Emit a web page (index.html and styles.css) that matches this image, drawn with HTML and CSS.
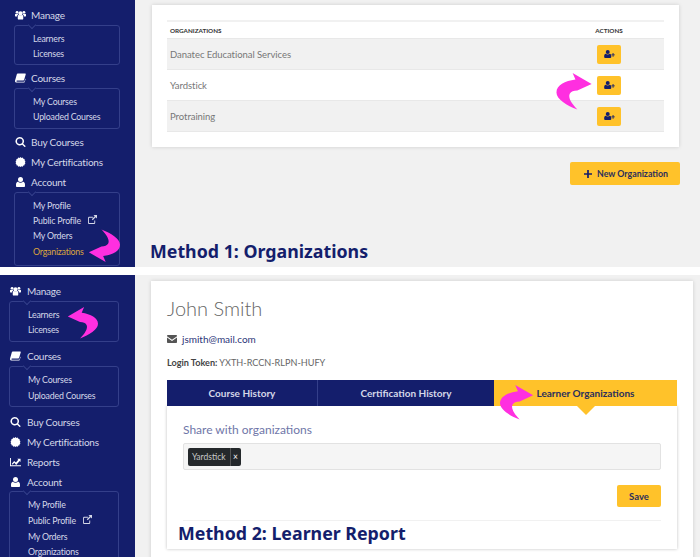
FILE: index.html
```html
<!DOCTYPE html>
<html lang="en">

<head>
    <meta charset="UTF-8">
    <meta name="viewport" content="width=device-width, initial-scale=1.0">
    <title>Sharing learners with organizations</title>
    <link rel="stylesheet" href="styles.css">
</head>

<body>

    <!-- Shared icons -->
    <svg class="icon-defs" aria-hidden="true">
        <symbol id="i-users" viewBox="0 0 24 20">
            <circle cx="12" cy="6.5" r="4.5" />
            <circle cx="4.5" cy="4" r="3" />
            <circle cx="19.5" cy="4" r="3" />
            <path d="M6 12.5c0-1.500 1.500-2.500 3-2.500 1 1 5 1 6 0 1.500 0 3 1 3 2.500V18c0 1-1 2-2 2H8c-1 0-2-1-2-2z" />
            <path d="M0 9c0-1 .8-1.800 1.800-1.800 1 .8 3 1 4.200.6.300 1 .9 1.500 1 1.700-1.500.6-2.500 1.500-2.700 3.500H1c-.6 0-1-.4-1-1zM24 9c0-1-.8-1.800-1.800-1.800-1 .8-3 1-4.200.6-.3 1-.9 1.500-1 1.700 1.500.6 2.500 1.500 2.700 3.500H23c.6 0 1-.4 1-1z" />
        </symbol>
        <symbol id="i-book" viewBox="0 0 24 20">
            <path d="M6 0h16c1 0 1.800.8 1.500 2l-3.500 12c-.3 1-1 1.500-2 1.500H5c-1.500 0-2.200.6-2.200 1.200S3.500 18 5 18h14c.8 0 1.500-.3 1.800-1l1.700-5.500.9.800L20.800 19c-.3.700-1 1-1.800 1H4c-2.500 0-4-1.500-4-3.500 0-.6.100-1.200.3-1.800L4 2C4.300.8 5 0 6 0z" />
        </symbol>
        <symbol id="i-search" viewBox="0 0 20 20">
            <path d="M8.500 0a8.500 8.500 0 0 1 6.900 13.400l4.200 4.200a1.400 1.400 0 0 1-2 2l-4.200-4.200A8.500 8.500 0 1 1 8.500 0zm0 3a5.500 5.500 0 1 0 0 11 5.500 5.500 0 0 0 0-11z" />
        </symbol>
        <symbol id="i-cert" viewBox="0 0 20 20">
            <path d="M10 0l2 1.800L14.600 1l1 2.400 2.600.4-.1 2.700L20 8.400 18.700 10.500 20 12.600l-1.900 1.900.1 2-2.600.6-1 2.400-2.600-.8L10 20l-2-1.300-2.600.8-1-2.400-2.600-.6.100-2L0 12.600l1.300-2.100L0 8.400l1.900-1.900-.1-2.700 2.600-.4 1-2.400L8 1.800z" />
        </symbol>
        <symbol id="i-user" viewBox="0 0 18 20">
            <circle cx="9" cy="5.200" r="5" />
            <path d="M3.800 9.500c1.300 1.200 3.200 1.800 5.200 1.800s3.900-.6 5.200-1.800c2.300.4 3.800 2.400 3.800 6V18c0 1.200-.9 2-2 2H2c-1.100 0-2-.8-2-2v-2.500c0-3.600 1.500-5.600 3.800-6z" />
        </symbol>
        <symbol id="i-chart" viewBox="0 0 24 20">
            <path d="M0 1h2v16h22v2H0z" />
            <path d="M4 14l5-6 4 3 5-6-2-2h7v7l-2-2-7.500 8.500L9.500 11.500 5.500 16z" />
        </symbol>
        <symbol id="i-external" viewBox="0 0 20 20">
            <path d="M3 4h8v2H3.500C2.700 6 2 6.700 2 7.500v9c0 .8.700 1.500 1.500 1.500h9c.8 0 1.500-.7 1.500-1.500V12h2v5c0 1.700-1.300 3-3 3H3c-1.700 0-3-1.300-3-3V7c0-1.700 1.300-3 3-3z" />
            <path d="M12 0h8v8l-3-3-6.500 6.500-2-2L15 3z" />
        </symbol>
        <symbol id="i-mail" viewBox="0 0 20 16">
            <path d="M2 0h16c1.100 0 2 .9 2 2v.6l-10 7-10-7V2C0 .9.900 0 2 0z" />
            <path d="M0 5l10 7 10-7v9c0 1.100-.9 2-2 2H2c-1.100 0-2-.9-2-2z" />
        </symbol>
        <symbol id="i-user-plus" viewBox="0 0 24 18">
            <circle cx="8" cy="4.500" r="4.500" />
            <path d="M3.300 8.500C4.500 9.600 6.200 10 8 10s3.500-.4 4.700-1.500c2 .3 3.300 2 3.300 5.300V16c0 1.100-.9 2-2 2H2c-1.100 0-2-.9-2-2v-2.200c0-3.300 1.300-5 3.300-5.300z" />
            <path d="M19 7h2v3h3v2h-3v3h-2v-3h-3v-2h3z" />
        </symbol>
        <symbol id="i-plus" viewBox="0 0 14 14">
            <path d="M5.500 0h3v5.500H14v3H8.500V14h-3V8.500H0v-3h5.500z" />
        </symbol>
        <symbol id="i-curl" viewBox="0 0 38 40">
            <path d="M37 12.500L17 1l3 7C9 9.500 0 14 0 21.500 0 28.500 11 35.500 22 39.500c-6-6-10-12.500-8-16.500 1.500-2.500 4-3.500 8-3.500z" />
        </symbol>
    </svg>

    <!-- Method 1 -->
    <section class="panel panel-orgs">
        <nav class="sidebar">
            <div class="nav-head"><svg class="nav-icon"><use href="#i-users" /></svg>Manage</div>
            <div class="nav-box">
                <a>Learners</a>
                <a>Licenses</a>
            </div>
            <div class="nav-head"><svg class="nav-icon"><use href="#i-book" /></svg>Courses</div>
            <div class="nav-box">
                <a>My Courses</a>
                <a>Uploaded Courses</a>
            </div>
            <div class="nav-head"><svg class="nav-icon"><use href="#i-search" /></svg>Buy Courses</div>
            <div class="nav-head"><svg class="nav-icon"><use href="#i-cert" /></svg>My Certifications</div>
            <div class="nav-head"><svg class="nav-icon"><use href="#i-user" /></svg>Account</div>
            <div class="nav-box nav-box-last">
                <a>My Profile</a>
                <a>Public Profile <svg class="ext-icon"><use href="#i-external" /></svg></a>
                <a>My Orders</a>
                <a class="active">Organizations</a>
            </div>
        </nav>

        <main class="content">
            <div class="card org-card">
                <table class="org-table">
                    <thead>
                        <tr>
                            <th>Organizations</th>
                            <th class="col-actions">Actions</th>
                        </tr>
                    </thead>
                    <tbody>
                        <tr>
                            <td>Danatec Educational Services</td>
                            <td class="col-actions"><button class="icon-btn"><svg><use href="#i-user-plus" /></svg></button></td>
                        </tr>
                        <tr>
                            <td>Yardstick</td>
                            <td class="col-actions"><button class="icon-btn"><svg><use href="#i-user-plus" /></svg></button></td>
                        </tr>
                        <tr>
                            <td>Protraining</td>
                            <td class="col-actions"><button class="icon-btn"><svg><use href="#i-user-plus" /></svg></button></td>
                        </tr>
                    </tbody>
                </table>
            </div>
            <div class="new-row">
                <button class="new-btn"><svg><use href="#i-plus" /></svg>New Organization</button>
            </div>
        </main>
    </section>

    <!-- Method 2 -->
    <section class="panel panel-report">
        <nav class="sidebar">
            <div class="nav-head"><svg class="nav-icon"><use href="#i-users" /></svg>Manage</div>
            <div class="nav-box">
                <a>Learners</a>
                <a>Licenses</a>
            </div>
            <div class="nav-head"><svg class="nav-icon"><use href="#i-book" /></svg>Courses</div>
            <div class="nav-box">
                <a>My Courses</a>
                <a>Uploaded Courses</a>
            </div>
            <div class="nav-head"><svg class="nav-icon"><use href="#i-search" /></svg>Buy Courses</div>
            <div class="nav-head"><svg class="nav-icon"><use href="#i-cert" /></svg>My Certifications</div>
            <div class="nav-head"><svg class="nav-icon"><use href="#i-chart" /></svg>Reports</div>
            <div class="nav-head"><svg class="nav-icon"><use href="#i-user" /></svg>Account</div>
            <div class="nav-box nav-box-last">
                <a>My Profile</a>
                <a>Public Profile <svg class="ext-icon"><use href="#i-external" /></svg></a>
                <a>My Orders</a>
                <a>Organizations</a>
            </div>
        </nav>

        <main class="content">
            <div class="card report-card">
                <h1 class="learner-name">John Smith</h1>
                <div class="learner-mail"><svg><use href="#i-mail" /></svg><a>jsmith@mail.com</a></div>
                <div class="learner-token"><b>Login Token:</b> YXTH-RCCN-RLPN-HUFY</div>

                <div class="tabs">
                    <div class="tab tab-course">Course History</div>
                    <div class="tab tab-cert">Certification History</div>
                    <div class="tab tab-orgs">Learner Organizations</div>
                </div>
                <div class="tab-body">
                    <div class="share-label">Share with organizations</div>
                    <div class="share-input">
                        <span class="chip"><span class="chip-name">Yardstick</span><span class="chip-x">×</span></span>
                    </div>
                    <div class="save-row">
                        <button class="save-btn">Save</button>
                    </div>
                    <div class="tab-rule"></div>
                </div>
            </div>
        </main>
    </section>

    <!-- Annotations laid over the screenshots -->
    <h2 class="method method-one">Method 1: Organizations</h2>
    <h2 class="method method-two">Method 2: Learner Report</h2>
    <svg class="curl curl-profile"><use href="#i-curl" /></svg>
    <svg class="curl curl-action"><use href="#i-curl" /></svg>
    <svg class="curl curl-learners"><use href="#i-curl" /></svg>
    <svg class="curl curl-tab"><use href="#i-curl" /></svg>

</body>

</html>
```

FILE: styles.css
```css
body {
    margin: 0;
    height: 557px;
    overflow: hidden;
    position: relative;
    background-color: #fff;
    font-family: Lato, "Noto Sans", sans-serif;
    color: #555;
}

.icon-defs {
    position: absolute;
    width: 0;
    height: 0;
}

.panel {
    display: flex;
    overflow: hidden;
    background-color: #f1f1f1;
}

.panel-orgs {
    height: 267px;
    margin-bottom: 8px;
}

.panel-report {
    height: 282px;
}

/* Sidebar */
.sidebar {
    flex: 0 0 135px;
    box-sizing: border-box;
    background-color: #141e6c;
    color: #d5d8e8;
}

.panel-orgs .sidebar {
    padding: 5px 15px 0 14px;
}

.panel-report .sidebar {
    padding: 6px 16px 0 9px;
}

.nav-head {
    display: flex;
    align-items: center;
    height: 19.500px;
    font-size: 10px;
    letter-spacing: -0.2px;
}

.nav-head + .nav-head {
    margin-top: 0.500px;
}

.nav-icon {
    flex: 0 0 11px;
    width: 11px;
    height: 10px;
    margin: 0 6px 0 1px;
    fill: #fff;
}

.panel-orgs .nav-icon {
    margin-right: 5px;
}

.nav-box {
    position: relative;
    box-sizing: border-box;
    margin-bottom: 3.500px;
    padding: 5px 0 3px 18px;
    border: 1px solid #343f8a;
    border-radius: 3px;
    font-size: 8.800px;
    letter-spacing: -0.200px;
}

.panel-report .nav-box {
    margin-bottom: 4.500px;
}

.nav-box-last {
    padding-bottom: 6px;
}

.nav-box::before {
    content: "";
    position: absolute;
    top: -4px;
    left: 14px;
    width: 5px;
    height: 5px;
    background-color: #141e6c;
    border-right: 1px solid #343f8a;
    border-bottom: 1px solid #343f8a;
    transform: rotate(45deg);
}

.nav-box a {
    display: block;
    height: 15.300px;
    line-height: 15.300px;
}

.panel-report .nav-box a {
    height: 15.700px;
    line-height: 15.700px;
}

.nav-box a.active {
    color: #dba63c;
}

.ext-icon {
    width: 9px;
    height: 9px;
    margin-left: 5px;
    fill: #d5d8e8;
}

/* Content */
.content {
    flex: 1;
    min-width: 0;
}

.panel-orgs .content {
    padding: 5px 21px 0 17px;
}

.panel-report .content {
    padding: 6px 7px 0 16px;
}

.card {
    box-sizing: border-box;
    background-color: #fff;
    box-shadow: 0 0 4px rgba(0, 0, 0, 0.15);
}

.org-card {
    height: 142px;
    padding: 15px;
}

.org-table {
    width: 100%;
    border-collapse: collapse;
    border-top: 2px solid #f1f1f1;
}

.org-table th {
    height: 16px;
    padding: 0 3px;
    text-align: left;
    font-size: 6.300px;
    font-weight: 700;
    text-transform: uppercase;
    color: #333;
}

.org-table td {
    height: 30px;
    padding: 0 3px;
    font-size: 9.500px;
    letter-spacing: -0.050px;
    color: #777;
    border-top: 1px solid #e8e8e8;
}

.org-table tbody tr:nth-child(odd) {
    background-color: #f1f1f1;
}

.org-table tbody tr:last-child td {
    border-bottom: 1px solid #e8e8e8;
}

.org-table .col-actions {
    width: 104px;
    text-align: center;
}

.icon-btn {
    display: inline-flex;
    align-items: center;
    justify-content: center;
    width: 24px;
    height: 19px;
    padding: 0;
    vertical-align: middle;
    background-color: #ffc22a;
    border: 0;
    border-radius: 2px;
}

.icon-btn svg {
    width: 11px;
    height: 8px;
    fill: #141e6c;
}

.new-row {
    display: flex;
    justify-content: flex-end;
    margin: 15px -1px 0 0;
}

.new-btn {
    display: flex;
    align-items: center;
    width: 110px;
    height: 23px;
    padding: 0 0 0 14px;
    background-color: #ffc22a;
    border: 0;
    border-radius: 2px;
    font-family: inherit;
    font-size: 8.800px;
    font-weight: 700;
    color: #2c2f5c;
    white-space: nowrap;
}

.new-btn svg {
    width: 8px;
    height: 8px;
    margin-right: 5px;
    fill: #141e6c;
}

.report-card {
    height: 290px;
    padding: 14px 16px 0;
}

.learner-name {
    margin: 0;
    height: 26px;
    line-height: 26px;
    font-size: 20px;
    font-weight: 300;
    color: #666;
}

.learner-mail {
    display: flex;
    align-items: center;
    margin-top: 11px;
    height: 14px;
    font-size: 10px;
    color: #2a3478;
}

.learner-mail svg {
    width: 10px;
    height: 8px;
    margin-right: 5px;
    fill: #555;
}

.learner-token {
    margin-top: 10px;
    height: 14px;
    line-height: 14px;
    font-size: 9.100px;
    color: #666;
}

.learner-token b {
    color: #444;
}

.tabs {
    display: flex;
    margin-top: 10px;
    height: 26px;
}

.tab {
    display: flex;
    align-items: center;
    justify-content: center;
    position: relative;
    box-sizing: border-box;
    font-size: 10px;
    font-weight: 700;
    background-color: #141e6c;
    color: #d5d8e8;
}

.tab-course {
    width: 151px;
    border-right: 1px solid #343f8a;
}

.tab-cert {
    width: 176px;
}

.tab-orgs {
    flex: 1;
    background-color: #ffc22a;
    color: #2c2f5c;
}

.tab-orgs::after {
    content: "";
    position: absolute;
    top: 26px;
    left: 50%;
    margin-left: -9px;
    border-top: 9px solid #ffc22a;
    border-left: 9px solid transparent;
    border-right: 9px solid transparent;
}

.tab-body {
    box-sizing: border-box;
    height: 143px;
    padding: 16px 16px 0;
    background-color: #fff;
    box-shadow: 0 0 3px rgba(0, 0, 0, 0.25);
}

.share-label {
    height: 16px;
    line-height: 16px;
    font-size: 12px;
    color: #6f76a8;
}

.share-input {
    box-sizing: border-box;
    display: flex;
    align-items: center;
    height: 27px;
    margin-top: 5px;
    padding-left: 4px;
    background-color: #f5f5f5;
    border: 1px solid #e2e2e2;
    border-radius: 2px;
}

.chip {
    display: flex;
    height: 18px;
    line-height: 18px;
    background-color: #24282b;
    border-radius: 2px;
    font-size: 8.500px;
    color: #c9c9c9;
}

.chip-name {
    padding: 0 4px;
    border-right: 1px solid #555;
}

.chip-x {
    width: 10px;
    text-align: center;
    color: #fff;
}

.save-row {
    display: flex;
    justify-content: flex-end;
    margin-top: 15px;
}

.save-btn {
    width: 44px;
    height: 22px;
    padding: 0;
    background-color: #ffc22a;
    border: 0;
    border-radius: 2px;
    font-family: inherit;
    font-size: 9.500px;
    font-weight: 700;
    color: #2c2f5c;
}

.tab-rule {
    margin-top: 13px;
    border-top: 1px solid #f1f1f1;
}

/* Annotations */
.method {
    position: absolute;
    margin: 0;
    font-family: "Noto Sans", sans-serif;
    font-size: 17.800px;
    line-height: 24px;
    font-weight: 700;
    color: #141e6c;
    white-space: nowrap;
}

.method-one {
    left: 150px;
    top: 239px;
}

.method-two {
    left: 178px;
    top: 521px;
}

.curl {
    position: absolute;
    fill: #ff2fe0;
}

.curl-profile {
    left: 88px;
    top: 229px;
    width: 32px;
    height: 34px;
    transform: rotate(180deg);
}

.curl-action {
    left: 556px;
    top: 72px;
    width: 37px;
    height: 38px;
}

.curl-learners {
    left: 67px;
    top: 306px;
    width: 31px;
    height: 33px;
    transform: scaleX(-1);
}

.curl-tab {
    left: 500px;
    top: 384px;
    width: 34px;
    height: 36px;
}
```
